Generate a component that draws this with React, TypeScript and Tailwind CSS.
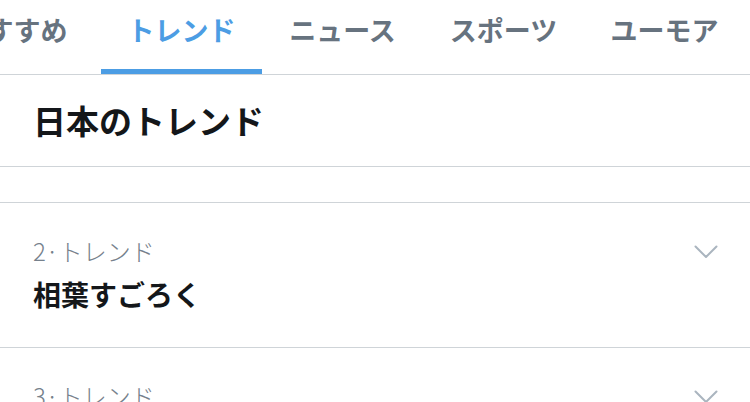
import React from 'react';

const TABS = ['おすすめ', 'トレンド', 'ニュース', 'スポーツ', 'ユーモア', 'エンタメ'];

const TRENDS = [
  { rank: 2, title: '相葉すごろく' },
  { rank: 3, title: '嵐のワクワク学校' },
];

const Chevron: React.FC = () => (
  <svg width="24" height="14" viewBox="0 0 24 14" fill="none" className="shrink-0">
    <path d="M1.5 1.5 L12 12 L22.5 1.5" stroke="#aab5bf" strokeWidth="2" strokeLinecap="round" strokeLinejoin="round" />
  </svg>
);

const App: React.FC = () => {
  return (
    <div
      className="w-[750px] h-[402px] overflow-hidden bg-white"
      style={{ fontFamily: '"Noto Sans CJK JP", "Noto Sans", sans-serif' }}
    >
      {/* tab strip, scrolled so the first tab is half off screen */}
      <div className="h-[75px] border-b border-[#cfd4d8] overflow-hidden">
        <div className="flex h-full -ml-[74px]">
          {TABS.map((tab, i) => {
            const active = tab === 'トレンド';
            return (
              <div
                key={tab}
                className={`shrink-0 flex flex-col items-center h-full ${i === 0 ? 'w-[175px]' : 'w-[161px]'}`}
              >
                <span
                  className={`pt-[11px] text-[27px] font-bold leading-[38px] ${active ? 'text-[#4c9de4]' : 'text-[#67737f]'}`}
                >
                  {tab}
                </span>
                <div className={`mt-auto h-[5px] w-full ${active ? 'bg-[#4c9de4]' : ''}`} />
              </div>
            );
          })}
        </div>
      </div>

      {/* section header */}
      <div className="h-[92px] border-b border-[#cfd4d8] pl-[33px] flex items-center">
        <h1 className="text-[33px] font-bold text-[#14171a] leading-none pb-[1px]">日本のトレンド</h1>
      </div>

      <div className="h-[36px] border-b border-[#cfd4d8]" />

      {TRENDS.map((t) => (
        <div key={t.rank} className="h-[145px] border-b border-[#cfd4d8] pl-[33px] pr-[32px] pt-[32px] flex items-start">
          <div className="flex-1 flex flex-col">
            <span className="text-[24px] leading-[32px] font-light text-[#76818c]">{t.rank}·トレンド</span>
            <span className="mt-[9px] text-[28px] leading-[36px] font-bold text-[#14171a]">{t.title}</span>
          </div>
          <div className="pt-[10px]">
            <Chevron />
          </div>
        </div>
      ))}
    </div>
  );
};

export default App;
